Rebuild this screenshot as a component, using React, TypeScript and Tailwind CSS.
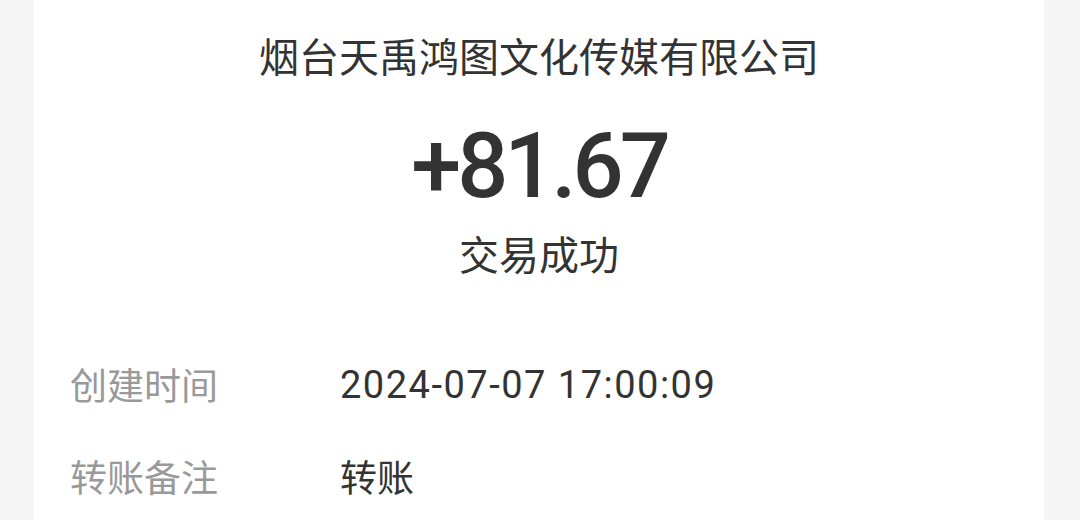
import React from "react";

export default function App() {
  return (
    <div className="w-[1080px] h-[520px] bg-[#f5f5f5] flex overflow-hidden" style={{ fontFamily: '"Noto Sans CJK SC", "Noto Sans", sans-serif' }}>
      <div className="ml-[34px] w-[1010px] h-full bg-white flex flex-col">
        <div className="flex flex-col items-center">
          <div className="mt-[29px] h-[52px] leading-[52px] text-[40px] text-[#333333]">烟台天禹鸿图文化传媒有限公司</div>
          <div className="mt-[36px] h-[100px] leading-[100px] text-[90px] font-medium text-[#333333] tracking-[-4px]" style={{ fontFamily: 'Roboto, "Noto Sans", sans-serif' }}>+81.67</div>
          <div className="mt-[8px] h-[56px] leading-[56px] text-[40px] text-[#333333]">交易成功</div>
        </div>
        <div className="mt-[79px] flex flex-col pl-[36px]">
          <div className="flex items-center h-[50px]">
            <div className="w-[270px] text-[37px] text-[#999999]">创建时间</div>
            <div className="text-[38px] text-[#333333] tracking-[1.5px]" style={{ fontFamily: 'Roboto, "Noto Sans", sans-serif' }}>2024-07-07 17:00:09</div>
          </div>
          <div className="flex items-center h-[50px] mt-[42px]">
            <div className="w-[270px] text-[37px] text-[#999999]">转账备注</div>
            <div className="text-[37px] text-[#333333]">转账</div>
          </div>
        </div>
      </div>
    </div>
  );
}
